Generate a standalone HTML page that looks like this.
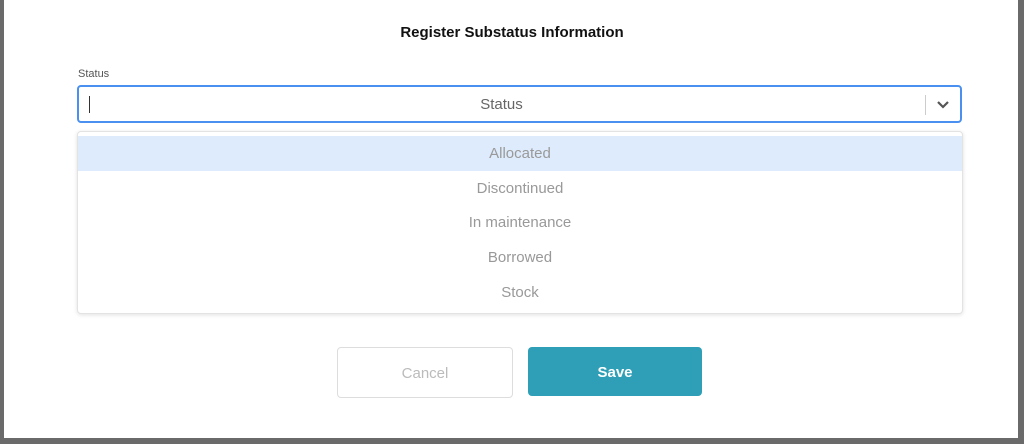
<!DOCTYPE html>
<html><head><style>
body{margin:0;width:1024px;height:444px;background:#6a6a6a;position:relative;overflow:hidden;font-family:"Liberation Sans",sans-serif}
.modal{position:absolute;left:4px;top:0;width:1014px;height:438px;background:#fff}
.title{position:absolute;left:0;top:24px;width:1024px;text-align:center;font-weight:bold;font-size:15px;color:#111}
.lbl{position:absolute;left:78px;top:68px;font-size:11px;color:#555}
.input{position:absolute;left:77px;top:85px;width:881px;height:34px;border:2px solid #4a90f0;border-radius:4px;background:#fff}
.caret{position:absolute;left:10px;top:9px;width:1px;height:17px;background:#333}
.ph{position:absolute;left:0;width:845px;top:9px;text-align:center;font-size:15px;color:#666}
.sep{position:absolute;left:846px;top:8px;width:1px;height:20px;background:#ccc}
.chev{position:absolute;left:857px;top:11px}
.menu{position:absolute;left:77px;top:131px;width:884px;height:181px;border:1px solid #e3e3e3;border-radius:4px;box-shadow:0 1px 4px rgba(0,0,0,.12);background:#fff}
.it{height:34.7px;line-height:36px;text-align:center;font-size:15px;color:#999}
.it.a{background:#deebfc}
.btn{position:absolute;top:347px;height:50px;border-radius:4px;text-align:center;line-height:50px;font-size:15px}
.c{left:337px;width:174px;height:49px;border:1px solid #ddd;color:#bbb;line-height:51px}
.s{left:528px;width:174px;height:49px;background:#2e9fb7;color:#fff;font-weight:bold;line-height:51px}
</style></head><body>
<div class="modal"></div>
<div class="title">Register Substatus Information</div>
<div class="lbl">Status</div>
<div class="input"><div class="caret"></div><div class="ph">Status</div><div class="sep"></div>
<svg class="chev" width="14" height="12" viewBox="0 0 14 12"><path d="M2 4l5 5 5-5" fill="none" stroke="#555" stroke-width="2.2"/></svg></div>
<div class="menu"><div style="height:4px"></div>
<div class="it a">Allocated</div><div class="it">Discontinued</div><div class="it">In maintenance</div><div class="it">Borrowed</div><div class="it">Stock</div></div>
<div class="btn c">Cancel</div><div class="btn s">Save</div>
</body></html>
